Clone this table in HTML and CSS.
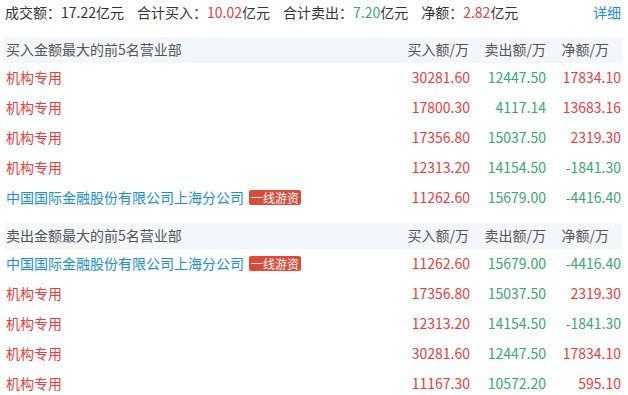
FILE: index.html
```html
<!DOCTYPE html>
<html lang="zh-CN">
<head>
<meta charset="utf-8">
<link rel="stylesheet" href="styles.css">
</head>
<body>
<div class="wrap">
  <div class="summary">
    <div class="stats">
      <span class="stat">成交额：17.22亿元</span>
      <span class="stat">合计买入：<em class="up">10.02</em>亿元</span>
      <span class="stat">合计卖出：<em class="down">7.20</em>亿元</span>
      <span class="stat">净额：<em class="up">2.82</em>亿元</span>
    </div>
    <a class="more">详细</a>
  </div>

  <div class="thead">
    <div class="name">买入金额最大的前5名营业部</div>
    <div class="c1">买入额/万</div>
    <div class="c2">卖出额/万</div>
    <div class="c3">净额/万</div>
  </div>
  <div class="row"><div class="name up">机构专用</div><div class="c1 up">30281.60</div><div class="c2 down">12447.50</div><div class="c3 up">17834.10</div></div>
  <div class="row"><div class="name up">机构专用</div><div class="c1 up">17800.30</div><div class="c2 down">4117.14</div><div class="c3 up">13683.16</div></div>
  <div class="row"><div class="name up">机构专用</div><div class="c1 up">17356.80</div><div class="c2 down">15037.50</div><div class="c3 up">2319.30</div></div>
  <div class="row"><div class="name up">机构专用</div><div class="c1 up">12313.20</div><div class="c2 down">14154.50</div><div class="c3 down">-1841.30</div></div>
  <div class="row"><div class="name blue">中国国际金融股份有限公司上海分公司<span class="tag">一线游资</span></div><div class="c1 up">11262.60</div><div class="c2 down">15679.00</div><div class="c3 down">-4416.40</div></div>

  <div class="thead second">
    <div class="name">卖出金额最大的前5名营业部</div>
    <div class="c1">买入额/万</div>
    <div class="c2">卖出额/万</div>
    <div class="c3">净额/万</div>
  </div>
  <div class="row"><div class="name blue">中国国际金融股份有限公司上海分公司<span class="tag">一线游资</span></div><div class="c1 up">11262.60</div><div class="c2 down">15679.00</div><div class="c3 down">-4416.40</div></div>
  <div class="row"><div class="name up">机构专用</div><div class="c1 up">17356.80</div><div class="c2 down">15037.50</div><div class="c3 up">2319.30</div></div>
  <div class="row"><div class="name up">机构专用</div><div class="c1 up">12313.20</div><div class="c2 down">14154.50</div><div class="c3 down">-1841.30</div></div>
  <div class="row"><div class="name up">机构专用</div><div class="c1 up">30281.60</div><div class="c2 down">12447.50</div><div class="c3 up">17834.10</div></div>
  <div class="row"><div class="name up">机构专用</div><div class="c1 up">11167.30</div><div class="c2 down">10572.20</div><div class="c3 up">595.10</div></div>
</div>
</body>
</html>
```

FILE: styles.css
```css
* { box-sizing: border-box; }
html, body { margin: 0; padding: 0; background: #fff; }
body {
  font-family: "Noto Sans CJK SC", "Noto Sans", sans-serif;
  font-size: 14px;
  color: #333;
}
.wrap {
  width: 618px;
  margin-left: 4px;
}
.summary {
  display: flex;
  align-items: center;
  justify-content: space-between;
  height: 24px;
  margin-bottom: 13px;
  padding: 0 1px 1px 1px;
}
.stats { display: flex; gap: 13px; }
.stat { white-space: nowrap; }
em { font-style: normal; }
.more { color: #1b8fd6; }
.up { color: #ee3b3b; }
.down { color: #35a96e; }
.blue { color: #1b8fd6; }

.thead, .row {
  display: flex;
  align-items: center;
  padding: 0 1px 0 2px;
  white-space: nowrap;
}
.thead {
  height: 26px;
  background: #f3f6fa;
  color: #555;
  padding-bottom: 2px;
}
.thead.second { margin-top: 10px; }
.row { height: 30px; padding-bottom: 2px; }
.name { flex: 1; display: flex; align-items: center; }
.c1 { width: 70px; text-align: right; }
.c2 { width: 76px; text-align: right; }
.c3 { width: 75px; text-align: right; }
.thead .c1 { padding-right: 1px; }
.thead .c3 { padding-right: 12px; }
.tag {
  display: inline-block;
  margin-left: 5px;
  background: #dd4a38;
  color: #fff;
  font-size: 12px;
  line-height: 15px;
  padding: 0 2px;
  border-radius: 2px;
}
```
